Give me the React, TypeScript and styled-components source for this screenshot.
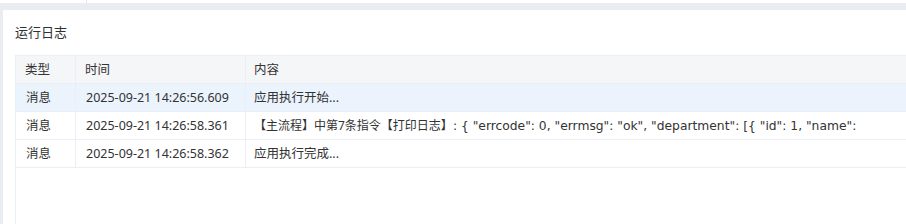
import React from "react";
import styled, { createGlobalStyle } from "styled-components";

const Global = createGlobalStyle`
  html, body { margin: 0; padding: 0; background: #e9ecf1; overflow: hidden; }
  body { font-family: "Noto Sans", "Noto Sans CJK SC", sans-serif; color: #333; }
`;

const Page = styled.div`
  width: 906px;
  height: 224px;
  display: flex;
  flex-direction: column;
  background: #e9ecf1;
  overflow: hidden;
`;

const TopStrip = styled.div`
  height: 3px;
  display: flex;
  background: #fff;
  flex-shrink: 0;
`;

const TopCell = styled.div<{ $w?: number }>`
  width: ${(p) => (p.$w ? `${p.$w}px` : "auto")};
  flex: ${(p) => (p.$w ? "none" : "1")};
  border-right: ${(p) => (p.$w ? "1px solid #e4e7ed" : "none")};
`;

const Panel = styled.div`
  margin: 7px 0 0 3px;
  flex: 1;
  background: #fff;
  padding: 12px 0 0 12px;
  display: flex;
  flex-direction: column;
  overflow: hidden;
`;

const Title = styled.div`
  font-size: 13px;
  line-height: 20px;
  height: 20px;
  color: #303133;
  margin-bottom: 13px;
`;

const TableWrap = styled.div`
  flex: 1;
  border-left: 1px solid #ebeef5;
  border-top: 1px solid #ebeef5;
  width: 891px;
`;

const Row = styled.div<{ $bg: string }>`
  display: grid;
  grid-template-columns: 60px 170px 1fr;
  height: 28px;
  background: ${(p) => p.$bg};
  border-bottom: 1px solid #ebeef5;
  box-sizing: border-box;
`;

const Cell = styled.div<{ $pl: number }>`
  font-size: 12.5px;
  line-height: 27px;
  padding-left: ${(p) => p.$pl}px;
  border-right: 1px solid #ebeef5;
  white-space: nowrap;
  overflow: hidden;
  color: #333;
  &:last-child { border-right: none; }
`;

const Cjk = styled.span`
  font-size: 12px;
`;

const Json = styled.span`
  font-family: "DejaVu Sans", "Noto Sans", sans-serif;
  font-size: 12.3px;
`;

type Log = { type: string; time: string; text: string; json?: string; bg: string };

const rows: Log[] = [
  { type: "消息", time: "2025-09-21 14:26:56.609", text: "应用执行开始...", bg: "#ebf3fd" },
  {
    type: "消息",
    time: "2025-09-21 14:26:58.361",
    text: "【主流程】中第7条指令【打印日志】",
    json: ': { "errcode": 0, "errmsg": "ok", "department": [{ "id": 1, "name":',
    bg: "#fff",
  },
  { type: "消息", time: "2025-09-21 14:26:58.362", text: "应用执行完成...", bg: "#fff" },
];

export default function App() {
  return (
    <Page>
      <Global />
      <TopStrip>
        <TopCell $w={86} />
        <TopCell />
      </TopStrip>
      <Panel>
        <Title>运行日志</Title>
        <TableWrap>
          <Row $bg="#f5f6f8">
            <Cell $pl={9}>类型</Cell>
            <Cell $pl={9}>时间</Cell>
            <Cell $pl={8}>内容</Cell>
          </Row>
          {rows.map((r, i) => (
            <Row key={i} $bg={r.bg}>
              <Cell $pl={10}>{r.type}</Cell>
              <Cell $pl={10}>{r.time}</Cell>
              <Cell $pl={8}>
                {r.json ? <Cjk>{r.text}</Cjk> : r.text}
                {r.json && <Json>{r.json}</Json>}
              </Cell>
            </Row>
          ))}
        </TableWrap>
      </Panel>
    </Page>
  );
}
